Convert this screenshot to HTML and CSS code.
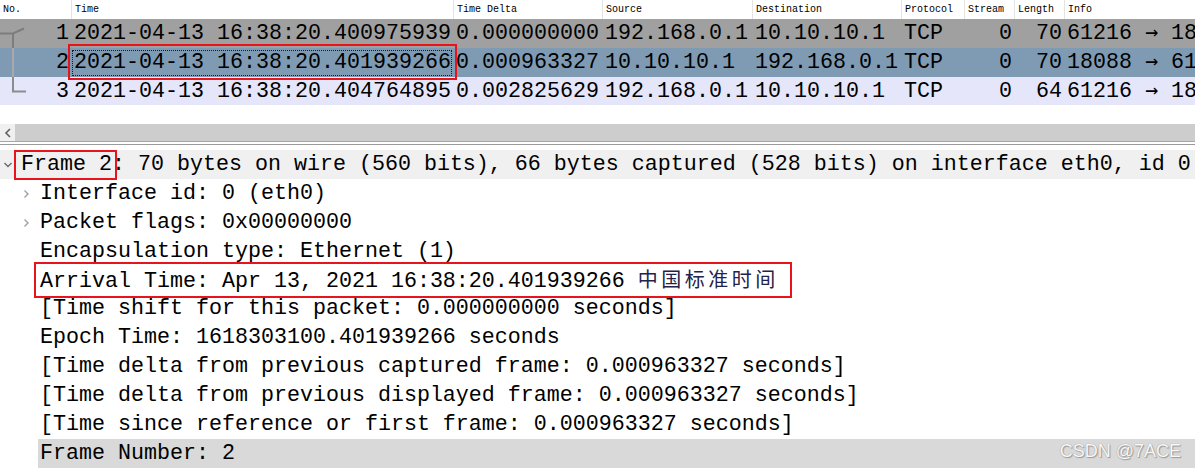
FILE: index.html
```html
<!DOCTYPE html>
<html>
<head>
<meta charset="utf-8">
<link rel="stylesheet" href="styles.css">
</head>
<body>
<div class="page">
  <div class="plist">
    <div class="phead">
      <div class="hc">No.</div>
      <div class="hc">Time</div>
      <div class="hc">Time Delta</div>
      <div class="hc">Source</div>
      <div class="hc">Destination</div>
      <div class="hc">Protocol</div>
      <div class="hc">Stream</div>
      <div class="hc">Length</div>
      <div class="hc">Info</div>
    </div>
    <div class="prows">
      <svg class="conv" width="30" height="90" viewBox="0 0 30 90">
        <path d="M0 14.5 H13 L24 9.5" stroke="#7d7d7d" stroke-width="2" fill="none"/>
        <path d="M13 14.5 V29" stroke="#7d7d7d" stroke-width="2" fill="none"/>
        <path d="M13 29 V58" stroke="#a9a9a9" stroke-width="2" fill="none"/>
        <path d="M13 58 V72.5 H26" stroke="#8c8c8c" stroke-width="2" fill="none"/>
      </svg>
      <div class="prow r1">
        <div class="c num">1</div>
        <div class="c">2021-04-13 16:38:20.400975939</div>
        <div class="c">0.000000000</div>
        <div class="c">192.168.0.1</div>
        <div class="c">10.10.10.1</div>
        <div class="c">TCP</div>
        <div class="c num">0</div>
        <div class="c num">70</div>
        <div class="c info">61216 <span class="arr">→</span> 18</div>
      </div>
      <div class="prow r2">
        <div class="c num">2</div>
        <div class="c focus">2021-04-13 16:38:20.401939266</div>
        <div class="c">0.000963327</div>
        <div class="c">10.10.10.1</div>
        <div class="c">192.168.0.1</div>
        <div class="c">TCP</div>
        <div class="c num">0</div>
        <div class="c num">70</div>
        <div class="c info">18088 <span class="arr">→</span> 61</div>
      </div>
      <div class="prow r3">
        <div class="c num">3</div>
        <div class="c">2021-04-13 16:38:20.404764895</div>
        <div class="c">0.002825629</div>
        <div class="c">192.168.0.1</div>
        <div class="c">10.10.10.1</div>
        <div class="c">TCP</div>
        <div class="c num">0</div>
        <div class="c num">64</div>
        <div class="c info">61216 <span class="arr">→</span> 18</div>
      </div>
    </div>
  </div>

  <div class="hscroll">
    <div class="sarrow">
      <svg width="8" height="10" viewBox="0 0 8 10"><path d="M6 1 L2 5 L6 9" stroke="#606060" stroke-width="1.6" fill="none"/></svg>
    </div>
    <div class="sthumb"></div>
  </div>
  <div class="splitter"></div>

  <div class="details">
    <div class="dl top">
      <span class="exp"><svg width="10" height="8" viewBox="0 0 10 8"><path d="M1.5 2 L5 5.5 L8.5 2" stroke="#6a6a6a" stroke-width="1.4" fill="none"/></svg></span>
      <span class="mark mark-frame">Frame 2</span>: 70 bytes on wire (560 bits), 66 bytes captured (528 bits) on interface eth0, id 0
    </div>
    <div class="dl child">
      <span class="exp"><svg width="8" height="10" viewBox="0 0 8 10"><path d="M2.5 1.5 L6 5 L2.5 8.5" stroke="#a0a0a0" stroke-width="1.4" fill="none"/></svg></span>Interface id: 0 (eth0)
    </div>
    <div class="dl child">
      <span class="exp"><svg width="8" height="10" viewBox="0 0 8 10"><path d="M2.5 1.5 L6 5 L2.5 8.5" stroke="#a0a0a0" stroke-width="1.4" fill="none"/></svg></span>Packet flags: 0x00000000
    </div>
    <div class="dl child"><span class="exp"></span>Encapsulation type: Ethernet (1)</div>
    <div class="dl child"><span class="exp"></span><span class="mark mark-arrival">Arrival Time: Apr 13, 2021 16:38:20.401939266 <span class="cjk">中国标准时间</span></span></div>
    <div class="dl child"><span class="exp"></span>[Time shift for this packet: 0.000000000 seconds]</div>
    <div class="dl child"><span class="exp"></span>Epoch Time: 1618303100.401939266 seconds</div>
    <div class="dl child"><span class="exp"></span>[Time delta from previous captured frame: 0.000963327 seconds]</div>
    <div class="dl child"><span class="exp"></span>[Time delta from previous displayed frame: 0.000963327 seconds]</div>
    <div class="dl child"><span class="exp"></span>[Time since reference or first frame: 0.000963327 seconds]</div>
    <div class="dl child sel"><span class="exp"></span><span class="seltext">Frame Number: 2</span></div>
  </div>

  <div class="watermark">CSDN @7ACE</div>
</div>
</body>
</html>
```

FILE: styles.css
```css
html, body {
  margin: 0;
  padding: 0;
  background: #ffffff;
}
body {
  width: 1195px;
  height: 469px;
  overflow: hidden;
  font-family: "Liberation Mono", "DejaVu Sans Mono", monospace;
  color: #000;
}
.page {
  position: relative;
  width: 1195px;
  height: 469px;
  overflow: hidden;
}

/* packet list */
.plist {
  width: 1195px;
}
.phead, .prow {
  display: grid;
  grid-template-columns: 71px 382px 149px 150px 149px 63px 50px 50px 131px;
}
.phead {
  height: 19px;
  background: #fff;
}
.hc {
  font-size: 10px;
  line-height: 19px;
  padding-left: 3px;
  border-left: 1px solid #e3e3e3;
  white-space: nowrap;
  overflow: hidden;
}
.hc:first-child {
  border-left: none;
  padding-left: 3px;
}
.prows {
  position: relative;
}
.conv {
  position: absolute;
  left: 0;
  top: 0;
  z-index: 2;
}
.prow {
  box-sizing: border-box;
  height: 29px;
  padding-top: 1px;
  font-size: 21.67px;
  line-height: 28px;
}
.prow.r3 { height: 28px; line-height: 27px; }
.r1 { background: #a0a0a0; }
.r2 { background: #7f9bb3; }
.r3 { background: #e6e6fa; }
.c {
  padding-left: 3px;
  white-space: nowrap;
}
.c.num {
  text-align: right;
  padding-left: 0;
  padding-right: 2px;
}
.c.info {
  overflow: hidden;
  padding-left: 3px;
  height: 28px;
}
.arr {
  font-family: "DejaVu Sans Mono", monospace;
  line-height: 0;
}
.c.focus {
  position: relative;
  outline: 1px dotted #1a1a1a;
  outline-offset: -2px;
}
.c.focus::after {
  content: "";
  position: absolute;
  left: -3px;
  right: -4px;
  top: -5px;
  bottom: -3px;
  border: 2px solid #e8141c;
}

/* horizontal scrollbar */
.hscroll {
  margin-top: 19px;
  height: 17px;
  display: flex;
  background: #f0f0f0;
}
.sarrow {
  width: 15px;
  display: flex;
  align-items: center;
  justify-content: center;
}
.sthumb {
  flex: 1;
  background: #cdcdcd;
}
.splitter {
  height: 2px;
  border-top: 1px solid #a6a6a6;
  border-bottom: 1px solid #9a9a9a;
}

/* details */
.details {
  margin-top: 5px;
}
.dl {
  box-sizing: border-box;
  height: 28.9px;
  padding-top: 1px;
  font-size: 21.67px;
  line-height: 28px;
  white-space: nowrap;
  display: flex;
  align-items: center;
}
.dl.top {
  background: #f0f0f0;
  padding-left: 3px;
}
.dl.top .exp {
  width: 18px;
  display: flex;
  align-items: center;
}
.dl.child {
  padding-left: 22px;
}
.dl.child .exp {
  width: 18px;
  height: 28px;
  display: flex;
  align-items: center;
  justify-content: flex-start;
}
.dl.sel {
  padding-left: 22px;
  padding-top: 0;
}
.dl.sel .exp {
  width: 16px;
}
.seltext {
  background: #d9d9d9;
  flex: 1;
  height: 29px;
  line-height: 30px;
  padding-left: 2px;
}
.mark {
  position: relative;
  white-space: pre;
}
.mark::after {
  content: "";
  position: absolute;
  border: 2px solid #e8141c;
}
.mark-frame::after {
  left: -7px;
  right: -5px;
  top: -1px;
  bottom: -1px;
}
.mark-arrival::after {
  left: -6px;
  right: -13px;
  top: -3px;
  bottom: -2px;
}
.cjk {
  font-family: "Noto Sans CJK SC", sans-serif;
  font-size: 20px;
  color: #23234a;
  letter-spacing: 3.5px;
}

.watermark {
  position: absolute;
  right: 14px;
  bottom: 7px;
  font-family: "Liberation Sans", Arial, sans-serif;
  font-size: 18px;
  color: #f7f7f7;
  text-shadow: 0 0 1px #8a8a8a, 1px 1px 1px #9a9a9a;
  z-index: 3;
}
```
